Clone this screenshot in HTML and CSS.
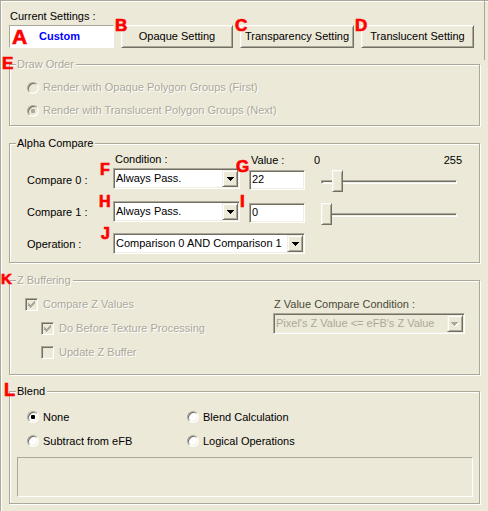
FILE: index.html
```html
<!DOCTYPE html>
<html>
<head>
<meta charset="utf-8">
<title>Settings</title>
<link rel="stylesheet" href="styles.css">
</head>
<body>
<div class="panel">
  <div class="top">
    <div class="cs-label">Current Settings :</div>
    <div class="preset-row">
      <div class="current-box"><span class="custom">Custom</span></div>
      <div class="btn btn-opaque">Opaque Setting</div>
      <div class="btn btn-transp">Transparency Setting</div>
      <div class="btn btn-transl">Translucent Setting</div>
    </div>
  </div>

  <div class="group g-draw disabled">
    <div class="legend">Draw Order</div>
    <div class="opt-row"><span class="radio"></span><span class="opt-text">Render with Opaque Polygon Groups (First)</span></div>
    <div class="opt-row"><span class="radio checked"></span><span class="opt-text">Render with Translucent Polygon Groups (Next)</span></div>
  </div>

  <div class="group g-alpha">
    <div class="legend">Alpha Compare</div>
    <div class="ac-head">
      <span class="col-label"></span>
      <span class="head-cond">Condition :</span>
      <span class="head-value">Value :</span>
      <span class="head-range"><span>0</span><span>255</span></span>
    </div>
    <div class="ac-row first">
      <span class="col-label">Compare 0 :</span>
      <div class="combo w-cond"><span class="combo-text">Always Pass.</span><span class="combo-btn"><svg class="arrow" width="7" height="4" viewBox="0 0 7 4"><path d="M0 0H7V1H6V2H5V3H4V4H3V3H2V2H1V1H0Z"/></svg></span></div>
      <div class="field">22</div>
      <div class="slider"><span class="track"></span><span class="thumb" style="left:11px"></span></div>
    </div>
    <div class="ac-row">
      <span class="col-label">Compare 1 :</span>
      <div class="combo w-cond"><span class="combo-text">Always Pass.</span><span class="combo-btn"><svg class="arrow" width="7" height="4" viewBox="0 0 7 4"><path d="M0 0H7V1H6V2H5V3H4V4H3V3H2V2H1V1H0Z"/></svg></span></div>
      <div class="field">0</div>
      <div class="slider"><span class="track"></span><span class="thumb" style="left:0px"></span></div>
    </div>
    <div class="ac-row">
      <span class="col-label">Operation :</span>
      <div class="combo w-wide"><span class="combo-text">Comparison 0 AND Comparison 1</span><span class="combo-btn"><svg class="arrow" width="7" height="4" viewBox="0 0 7 4"><path d="M0 0H7V1H6V2H5V3H4V4H3V3H2V2H1V1H0Z"/></svg></span></div>
    </div>
  </div>

  <div class="group g-z disabled">
    <div class="legend">Z Buffering</div>
    <div class="z-left">
      <div class="chk-row"><span class="check"><svg width="11" height="11" viewBox="0 0 11 11"><path transform="translate(2 2)" d="M6 0h1v1h-1z M5 1h2v1h-2z M0 2h1v1h-1z M4 2h3v1h-3z M0 3h2v1h-2z M3 3h3v1h-3z M0 4h5v1h-5z M1 5h3v1h-3z M2 6h1v1h-1z"/></svg></span><span class="chk-text">Compare Z Values</span></div>
      <div class="chk-row indent"><span class="check"><svg width="11" height="11" viewBox="0 0 11 11"><path transform="translate(2 2)" d="M6 0h1v1h-1z M5 1h2v1h-2z M0 2h1v1h-1z M4 2h3v1h-3z M0 3h2v1h-2z M3 3h3v1h-3z M0 4h5v1h-5z M1 5h3v1h-3z M2 6h1v1h-1z"/></svg></span><span class="chk-text">Do Before Texture Processing</span></div>
      <div class="chk-row indent"><span class="check"></span><span class="chk-text">Update Z Buffer</span></div>
    </div>
    <div class="z-right">
      <div class="z-label">Z Value Compare Condition :</div>
      <div class="combo w-wide combo-disabled"><span class="combo-text">Pixel's Z Value &lt;= eFB's Z Value</span><span class="combo-btn"><svg class="arrow" width="8" height="5" viewBox="0 0 8 5"><path class="arrow-hi" transform="translate(1 1)" d="M0 0H7V1H6V2H5V3H4V4H3V3H2V2H1V1H0Z"/><path d="M0 0H7V1H6V2H5V3H4V4H3V3H2V2H1V1H0Z"/></svg></span></div>
    </div>
  </div>

  <div class="group g-blend">
    <div class="legend">Blend</div>
    <div class="blend-grid">
      <div class="opt-row"><span class="radio checked"></span><span class="opt-text">None</span></div>
      <div class="opt-row"><span class="radio"></span><span class="opt-text">Blend Calculation</span></div>
      <div class="opt-row"><span class="radio"></span><span class="opt-text">Subtract from eFB</span></div>
      <div class="opt-row"><span class="radio"></span><span class="opt-text">Logical Operations</span></div>
    </div>
    <div class="blend-box"></div>
  </div>

  <span class="tag tag-a">A</span>
  <span class="tag tag-b">B</span>
  <span class="tag tag-c">C</span>
  <span class="tag tag-d">D</span>
  <span class="tag tag-e">E</span>
  <span class="tag tag-f">F</span>
  <span class="tag tag-g">G</span>
  <span class="tag tag-h">H</span>
  <span class="tag tag-i">I</span>
  <span class="tag tag-j">J</span>
  <span class="tag tag-k">K</span>
  <span class="tag tag-l">L</span>
</div>
</body>
</html>
```

FILE: styles.css
```css
* { box-sizing: border-box; }
html, body { margin: 0; padding: 0; }
body {
  background: #ECE9D8;
  font-family: "Liberation Sans", Arial, sans-serif;
  font-size: 11px;
  line-height: 13px;
  color: #000;
}
.panel {
  position: relative;
  width: 488px;
  height: 511px;
  overflow: hidden;
  border-left: 1px solid #ACA899;
  border-top: 1px solid #ACA899;
  box-shadow: inset 1px 1px 0 #fff;
}

/* top area */
.top {
  width: 484px;
  height: 59px;
  border-right: 1px solid #ACA899;
  padding: 9px 0 0 9px;
}
.cs-label { height: 13px; white-space: nowrap; }
.preset-row { display: flex; margin-top: 2px; margin-left: -1px; }
.current-box {
  width: 105px;
  height: 23px;
  background: #fff;
  border: 1px solid;
  border-color: #ACA899 #fff #fff #ACA899;
  padding: 4px 0 0 29px;
}
.custom { color: #0000FF; font-weight: bold; }
.btn {
  height: 23px;
  margin-left: 7px;
  display: flex;
  align-items: center;
  justify-content: center;
  border: 1px solid;
  border-color: #fff #716F64 #716F64 #fff;
  box-shadow: inset 1px 1px 0 #F1EFE2, inset -1px -1px 0 #ACA899;
  background: #ECE9D8;
  white-space: nowrap;
}
.btn-opaque { width: 112px; }
.btn-transp { width: 114px; }
.btn-transl { width: 113px; }

/* group boxes */
.group {
  position: relative;
  width: 471px;
  margin-left: 8px;
  border: 1px solid #ACA899;
  box-shadow: inset 1px 1px 0 #fff, 1px 1px 0 #fff;
}
.legend {
  position: absolute;
  top: -7px;
  left: 6px;
  padding: 0 2px 0 1px;
  background: #ECE9D8;
  line-height: 13px;
  white-space: nowrap;
}
.disabled .legend,
.disabled .opt-text,
.disabled .chk-text {
  color: #ACA899;
  text-shadow: 1px 1px 0 #fff;
}

.opt-row { display: flex; align-items: center; height: 23px; white-space: nowrap; }
.opt-text { margin-left: 4px; }

.radio {
  position: relative;
  flex: none;
  width: 12px;
  height: 12px;
  border-radius: 50%;
  border: 1px solid;
  border-color: #ACA899 #fff #fff #ACA899;
  background: #fff;
  box-shadow: inset 1px 1px 0 #716F64, inset -1px -1px 0 #F1EFE2;
}
.radio.checked::after {
  content: "";
  position: absolute;
  left: 3px;
  top: 3px;
  width: 4px;
  height: 4px;
  border-radius: 1px;
  background: #000;
}
.disabled .radio { background: #ECE9D8; }
.disabled .radio.checked::after { background: #ACA899; }

.check {
  flex: none;
  width: 13px;
  height: 13px;
  border: 1px solid;
  border-color: #ACA899 #fff #fff #ACA899;
  background: #fff;
  box-shadow: inset 1px 1px 0 #716F64, inset -1px -1px 0 #F1EFE2;
}
.check svg { display: block; fill: #000; shape-rendering: crispEdges; }
.disabled .check { background: #ECE9D8; }
.disabled .check svg { fill: #ACA899; }

/* draw order */
.g-draw {
  margin-top: 4px;
  height: 62px;
  padding: 11px 0 0 17px;
}

/* alpha compare */
.g-alpha {
  margin-top: 17px;
  height: 120px;
  padding: 9px 0 0 17px;
}
.ac-head { display: flex; height: 15px; white-space: nowrap; }
.ac-row { display: flex; align-items: flex-start; height: 32px; }
.ac-row.first { height: 33px; }
.col-label { flex: none; width: 86px; margin-top: 5px; white-space: nowrap; }
.ac-row.first .col-label { margin-top: 6px; }
.ac-head .col-label { margin-top: 0; }
.head-cond { width: 127px; padding-left: 2px; }
.head-value { width: 56px; margin-left: 9px; padding-left: 2px; margin-top: 1px; }
.head-range {
  display: flex;
  justify-content: space-between;
  width: 148px;
  margin-left: 9px;
  margin-top: 1px;
}

.combo {
  display: flex;
  flex: none;
  height: 21px;
  padding: 1px;
  border: 1px solid;
  border-color: #ACA899 #fff #fff #ACA899;
  box-shadow: inset 1px 1px 0 #716F64, inset -1px -1px 0 #F1EFE2;
  background: #fff;
}
.w-cond { width: 127px; }
.w-wide { width: 192px; }
.combo-text { flex: 1; padding-left: 1px; line-height: 17px; white-space: nowrap; overflow: hidden; }
.combo-btn {
  flex: none;
  width: 16px;
  height: 17px;
  display: flex;
  align-items: center;
  justify-content: center;
  padding-top: 1px;
  border: 1px solid;
  border-color: #F1EFE2 #716F64 #716F64 #F1EFE2;
  box-shadow: inset 1px 1px 0 #fff, inset -1px -1px 0 #ACA899;
  background: #ECE9D8;
}
.arrow { display: block; fill: #000; shape-rendering: crispEdges; }
.combo-disabled { background: #ECE9D8; }
.combo-disabled .combo-text { color: #ACA899; }
.combo-disabled .arrow { fill: #ACA899; }
.combo-disabled .arrow .arrow-hi { fill: #fff; }

.field {
  flex: none;
  width: 56px;
  height: 20px;
  margin-left: 9px;
  margin-top: 2px;
  padding: 2px 0 0 2px;
  border: 1px solid;
  border-color: #ACA899 #fff #fff #ACA899;
  box-shadow: inset 1px 1px 0 #716F64, inset -1px -1px 0 #F1EFE2;
  background: #fff;
}
.slider {
  position: relative;
  flex: none;
  width: 136px;
  height: 22px;
  margin-left: 16px;
  margin-top: 2px;
}
.track {
  position: absolute;
  left: 0;
  right: 0;
  top: 10px;
  height: 4px;
  border: 1px solid;
  border-color: #ACA899 #fff #fff #ACA899;
  box-shadow: inset 1px 1px 0 #716F64, inset -1px -1px 0 #F1EFE2;
}
.thumb {
  position: absolute;
  top: 0;
  width: 11px;
  height: 22px;
  border: 1px solid;
  border-color: #fff #716F64 #716F64 #fff;
  box-shadow: inset 1px 1px 0 #F1EFE2, inset -1px -1px 0 #ACA899;
  background: #ECE9D8;
}

/* z buffering */
.g-z {
  display: flex;
  margin-top: 17px;
  height: 95px;
  padding: 17px 0 0 15px;
}
.z-left { flex: none; width: 248px; }
.chk-row { display: flex; height: 24px; white-space: nowrap; }
.chk-row.indent { padding-left: 16px; }
.chk-text { margin-left: 5px; }
.z-label { margin-left: 1px; height: 13px; color: #4a4a3a; white-space: nowrap; }
.z-right .combo { margin-top: 2px; }

/* blend */
.g-blend {
  margin-top: 16px;
  height: 113px;
  padding: 13px 0 0 7px;
}
.blend-grid {
  display: grid;
  grid-template-columns: 160px 200px;
  grid-auto-rows: 24px;
  margin-left: 10px;
}
.blend-grid .opt-row { height: 24px; }
.blend-box {
  margin-top: 4px;
  width: 456px;
  height: 40px;
  border: 1px solid;
  border-color: #ACA899 #fff #fff #ACA899;
}

/* red annotation letters */
.tag {
  position: absolute;
  color: #FF0000;
  font-weight: bold;
  font-size: 17px;
  line-height: 17px;
  -webkit-text-stroke: 0.7px #FF0000;
}
.tag-a { left: 11px; top: 25px; font-size: 21px; line-height: 21px; }
.tag-b { left: 114px; top: 16px; }
.tag-c { left: 234px; top: 16px; }
.tag-d { left: 354px; top: 16px; }
.tag-e { left: 1px; top: 54px; }
.tag-f { left: 99px; top: 161px; font-size: 16px; line-height: 16px; }
.tag-g { left: 235px; top: 157px; }
.tag-h { left: 98px; top: 193px; font-size: 16px; line-height: 16px; }
.tag-i { left: 239px; top: 192px; }
.tag-j { left: 100px; top: 225px; font-size: 16px; line-height: 16px; }
.tag-k { left: 0; top: 270px; font-size: 15px; line-height: 15px; }
.tag-l { left: 3px; top: 380px; font-size: 18px; line-height: 18px; }
```
